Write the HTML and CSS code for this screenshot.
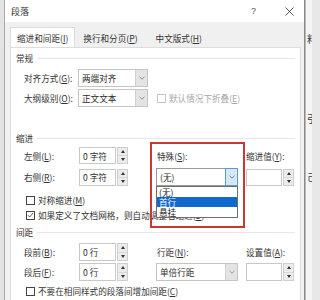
FILE: index.html
```html
<!DOCTYPE html>
<html lang="zh-CN">
<head>
<meta charset="utf-8">
<title>段落</title>
<link rel="stylesheet" href="styles.css">
</head>
<body>
<div class="screen">
  <div class="edge-left"></div>
  <div class="dialog">
    <div class="titlebar">
      <span class="title">段落</span>
      <span class="help">?</span>
      <svg class="close" width="9" height="9" viewBox="0 0 9 9"><path d="M0.5 0.5L8.5 8.5M8.5 0.5L0.5 8.5" stroke="#444" stroke-width="0.9" fill="none"/></svg>
    </div>
    <div class="tabs">
      <div class="tab active">缩进和间距(<u>I</u>)</div>
      <div class="tab">换行和分页(<u>P</u>)</div>
      <div class="tab">中文版式(<u>H</u>)</div>
    </div>
    <div class="panel">
      <div class="section s-general"><span>常规</span><i class="rule"></i></div>
      <div class="row r-align">
        <span class="label">对齐方式(<u>G</u>):</span>
        <div class="select s-wide"><span class="val">两端对齐</span><span class="arrow"><svg width="6" height="4" viewBox="0 0 6 4"><path d="M0.5 0.8L3 3.2L5.5 0.8" stroke="#777" stroke-width="0.8" fill="none"/></svg></span></div>
      </div>
      <div class="row r-outline">
        <span class="label">大纲级别(<u>O</u>):</span>
        <div class="select s-wide"><span class="val">正文文本</span><span class="arrow"><svg width="6" height="4" viewBox="0 0 6 4"><path d="M0.5 0.8L3 3.2L5.5 0.8" stroke="#777" stroke-width="0.8" fill="none"/></svg></span></div>
        <label class="check disabled"><span class="box"></span><span>默认情况下折叠(<u>E</u>)</span></label>
      </div>

      <div class="section s-indent"><span>缩进</span><i class="rule"></i></div>
      <div class="row r-ind1">
        <span class="label">左侧(<u>L</u>):</span>
        <div class="spin"><span class="field">0 字符</span><span class="btns"><i class="up"></i><i class="down"></i></span></div>
        <span class="label l-col3">特殊(<u>S</u>):</span>
        <span class="label">缩进值(<u>Y</u>):</span>
      </div>
      <div class="row r-ind2">
        <span class="label">右侧(<u>R</u>):</span>
        <div class="spin"><span class="field">0 字符</span><span class="btns"><i class="up"></i><i class="down"></i></span></div>
        <div class="select s-special focus">
          <span class="val">(无)</span><span class="arrow"><svg width="6" height="4" viewBox="0 0 6 4"><path d="M0.5 0.8L3 3.2L5.5 0.8" stroke="#3c6ea8" stroke-width="0.8" fill="none"/></svg></span>
          <ul class="dropdown">
            <li>(无)</li>
            <li class="sel">首行</li>
            <li>悬挂</li>
          </ul>
        </div>
        <div class="spin s-value"><span class="field"></span><span class="btns"><i class="up"></i><i class="down"></i></span></div>
      </div>
      <label class="check c-sym"><span class="box"></span><span>对称缩进(<u>M</u>)</span></label>
      <label class="check c-grid"><span class="box checked"><svg width="8" height="8" viewBox="0 0 8 8"><path d="M1 4.2L3.1 6.3L7 1.6" stroke="#333" stroke-width="0.9" fill="none"/></svg></span><span>如果定义了文档网格，则自动调整右缩进(<u>D</u>)</span></label>

      <div class="section s-space"><span>间距</span><i class="rule"></i></div>
      <div class="row r-sp1">
        <span class="label">段前(<u>B</u>):</span>
        <div class="spin tall"><span class="field">0 行</span><span class="btns"><i class="up"></i><i class="down"></i></span></div>
        <span class="label l-col3">行距(<u>N</u>):</span>
        <span class="label">设置值(<u>A</u>):</span>
      </div>
      <div class="row r-sp2">
        <span class="label">段后(<u>F</u>):</span>
        <div class="spin tall"><span class="field">0 行</span><span class="btns"><i class="up"></i><i class="down"></i></span></div>
        <div class="select s-special"><span class="val">单倍行距</span><span class="arrow"><svg width="6" height="4" viewBox="0 0 6 4"><path d="M0.5 0.8L3 3.2L5.5 0.8" stroke="#888" stroke-width="0.8" fill="none"/></svg></span></div>
        <div class="spin s-value tall"><span class="field"></span><span class="btns"><i class="up"></i><i class="down"></i></span></div>
      </div>
      <label class="check c-nospace"><span class="box"></span><span>不要在相同样式的段落间增加间距(<u>C</u>)</span></label>

      <div class="highlight"></div>
    </div>
  </div>
  <div class="edge-right">
    <span class="g g1">料</span>
    <span class="g g2">引</span>
    <span class="g g3">己</span>
  </div>
</div>
</body>
</html>
```

FILE: styles.css
```css
* { box-sizing: border-box; }
html, body { margin: 0; padding: 0; }
body {
  width: 312px;
  height: 300px;
  overflow: hidden;
  background: #e8e8e8;
  font-family: "Noto Sans CJK SC", "Noto Sans", sans-serif;
  font-size: 8.6px;
  color: #2b2b2b;
}
u { text-decoration: underline; text-underline-offset: 1px; }

.screen {
  display: flex;
  width: 312px;
  height: 300px;
}
.edge-left {
  width: 4px;
  flex: none;
  background: #e3e3e3;
}
.dialog {
  width: 301px;
  flex: none;
  height: 300px;
  border-left: 1px solid #a9a9a9;
  border-right: 1px solid #8a8a8a;
  background: #f1f1f1;
  display: flex;
  flex-direction: column;
}
.edge-right {
  flex: 1;
  background: #f4f4f4;
  border-left: 1px solid #b8b8b8;
  overflow: hidden;
  display: flex;
  flex-direction: column;
  align-items: flex-start;
}
.g {
  font-size: 10px;
  line-height: 10px;
  color: #3a3a3a;
  margin-left: 1px;
}
.g1 { margin-top: 34px; }
.g2 { margin-top: 70px; }
.g3 { margin-top: 48px; }

/* title bar */
.titlebar {
  height: 22px;
  background: #ffffff;
  display: flex;
  align-items: center;
  padding-left: 6px;
  flex: none;
}
.title { font-size: 9px; color: #333; }
.help {
  margin-left: auto;
  font-size: 9px;
  color: #555;
  font-family: "Liberation Sans", sans-serif;
}
.close { margin-left: 29px; margin-right: 10px; }

/* tabs */
.tabs {
  height: 25px;
  flex: none;
  display: flex;
  align-items: flex-end;
  padding-left: 5px;
  background: #f0f0f0;
}
.tab {
  height: 20px;
  display: flex;
  align-items: center;
  padding: 0 7px;
  color: #333;
  border: 1px solid transparent;
  border-bottom: none;
}
.tab.active {
  background: #ffffff;
  border-color: #dcdcdc;
  padding: 0 6px;
  position: relative;
  top: 1px;
  height: 21px;
}
.tab:nth-child(3) { padding-left: 9px; }

/* panel */
.panel {
  position: relative;
  flex: 1;
  margin: 0 3px 0 5px;
  background: #ffffff;
  border: 1px solid #dcdcdc;
  border-bottom: none;
}
.section {
  display: flex;
  align-items: center;
  height: 12px;
  padding-left: 5px;
  padding-right: 5px;
  color: #333;
}
.section .rule {
  flex: 1;
  height: 1px;
  background: #e6e6e6;
  margin-left: 4px;
}
.s-general { margin-top: 4px; }
.s-indent { margin-top: 25px; }
.s-space { margin-top: 4px; }

.row {
  display: grid;
  grid-template-columns: 55px 77px 90px 48px;
  align-items: center;
  padding-left: 13px;
}
.label { color: #333; white-space: nowrap; }
.l-col3 { padding-left: 1px; }

.r-align { margin-top: 5px; }
.r-outline { margin-top: 2px; }
.r-ind1 { margin-top: 3px; }
.r-ind2 { margin-top: 4px; }
.r-sp1 { margin-top: 5px; }
.r-sp2 { margin-top: 2px; }

/* select */
.select {
  position: relative;
  height: 18px;
  display: flex;
  border: 1px solid #c4c4c4;
  background: #fff;
}
.select .val {
  flex: 1;
  display: flex;
  align-items: center;
  padding-left: 3px;
  color: #2b2b2b;
}
.select .arrow {
  width: 12px;
  display: flex;
  align-items: center;
  justify-content: center;
  background: #e4e4e4;
  border-left: 1px solid #d0d0d0;
}
.s-wide { width: 70px; margin-left: -1px; }
.s-special { width: 82px; }
.select.focus { border-color: #9a9a9a; }
.select.focus .arrow {
  background: #d6e8f8;
  border: 1px solid #5a9ad6;
  margin: -1px -1px -1px 0;
  width: 13px;
}

.dropdown {
  position: absolute;
  left: -1px;
  top: 17px;
  width: 82px;
  margin: 0;
  padding: 0;
  list-style: none;
  background: #fff;
  border: 1px solid #6e6e6e;
  z-index: 2;
}
.dropdown li {
  height: 10px;
  line-height: 10px;
  padding-left: 2px;
  color: #222;
}
.dropdown li.sel {
  background: #1168cf;
  color: #fff;
}

/* spin */
.spin {
  display: flex;
  height: 17px;
  gap: 1px;
}
.spin.tall { height: 18px; }
.spin .field {
  width: 37px;
  border: 1px solid #c8c8c8;
  display: flex;
  align-items: center;
  padding-left: 3px;
  background: #fff;
  color: #2b2b2b;
}
.spin .btns {
  width: 11px;
  display: flex;
  flex-direction: column;
  border: 1px solid #cfcfcf;
  background: #ececec;
}
.spin .btns i {
  flex: 1;
  display: flex;
  align-items: center;
  justify-content: center;
}
.spin .btns i::before {
  content: "";
  border-left: 2.5px solid transparent;
  border-right: 2.5px solid transparent;
}
.spin .btns .up { border-bottom: 1px solid #d8d8d8; }
.spin .btns .up::before { border-bottom: 3px solid #333; }
.spin .btns .down::before { border-top: 3px solid #333; }
.s-value .field { width: 37px; }

/* checkboxes */
.check {
  display: flex;
  align-items: center;
  gap: 3px;
  height: 14px;
  color: #333;
  white-space: nowrap;
}
.check .box {
  width: 9px;
  height: 9px;
  border: 1px solid #444;
  background: #fff;
  display: flex;
  align-items: center;
  justify-content: center;
  flex: none;
}
.check.disabled { color: #a8a8a8; margin-left: 1px; }
.check.disabled .box { border-color: #c6c6c6; }
.c-sym { margin-top: 7px; padding-left: 15px; }
.c-grid { margin-top: 1px; padding-left: 15px; }
.c-nospace { margin-top: 3px; padding-left: 15px; }

/* annotation box */
.highlight {
  position: absolute;
  left: 139px;
  top: 94px;
  width: 95px;
  height: 86px;
  border: 2px solid #c63a31;
  z-index: 3;
  pointer-events: none;
}
```
